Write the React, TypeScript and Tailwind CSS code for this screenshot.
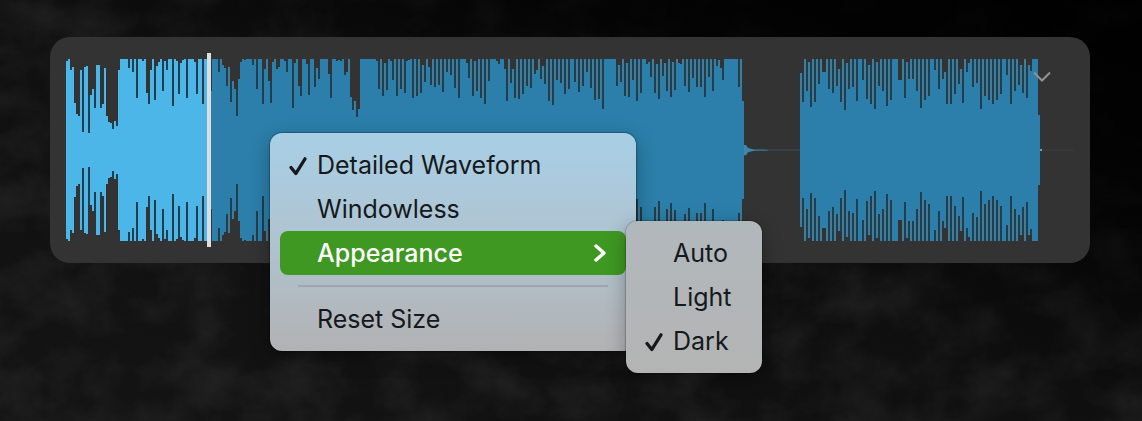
import { useState } from "react";

interface MenuItemProps {
  label: string;
  checked?: boolean;
  onSelect?: () => void;
}

// How far each 2px bar stops short of full height, top and bottom alike
const INTRO = [
  2, 0, 11, 8, 44, 55, 57, 11, 73, 8, 7, 74, 36, 30, 49, 6, 6, 49, 45, 9, 57, 63, 64, 70, 62, 67, 11, 0, 0, 0,
  0, 9, 0, 13, 0, 39, 0, 0, 2, 0, 34, 45, 11, 0, 41, 7, 3, 0, 32, 2, 11, 0, 0, 47, 0, 2, 35, 4, 1, 0,
  39, 0, 0, 0, 3, 35, 0, 0, 45, 0, 0, 0, 32, 0, 0, 0, 13, 0, 6, 9, 27, 8, 43, 22, 30, 57, 20, 3, 0, 1,
  0, 0, 0, 6, 0, 30, 0, 0, 45, 10, 0, 22, 44, 3, 0, 10, 8, 0, 0, 2, 13, 0, 0, 49, 4, 0, 27, 37, 0, 0,
  5, 36, 0, 0, 28, 9, 20, 0, 0, 0, 0, 15, 39, 0, 0, 2, 1, 2, 0, 16, 13, 0, 38, 51, 42, 58, 50, 0, 0, 0,
  0, 0, 0, 0, 0, 2, 30, 0, 37, 4, 31, 0, 2, 21, 0, 37, 0, 30, 0, 34, 2, 1, 0, 39, 0, 37, 0, 34, 6, 23,
  0, 8, 26, 0, 28, 0, 26, 0, 33, 0, 13, 0, 16, 0, 29, 0, 39, 0, 0, 0, 4, 19, 0, 37, 2, 32, 0, 39, 0, 45,
  0, 22, 0, 0, 0, 2, 5, 0, 0, 10, 42, 0, 24, 10, 39, 0, 40, 0, 35, 0, 27, 0, 29, 0, 15, 11, 0, 20, 7, 25,
  0, 42, 0, 46, 0, 21, 0, 24, 0, 35, 0, 30, 0, 0, 23, 0, 33, 0, 27, 0, 13, 0, 29, 0, 41, 0, 40, 0, 50, 0,
  0, 0, 0, 0, 0, 27, 6, 23, 0, 37, 4, 38, 0, 21, 0, 42, 0, 34, 0, 0, 5, 3, 18, 0, 34, 5, 40, 0, 17, 4,
  32, 0, 38, 3, 31, 0, 4, 5, 0, 27, 0, 33, 0, 19, 0, 28, 0, 28, 0, 38, 0, 18, 0, 32, 0, 7, 1, 9, 21, 0,
  0, 0, 0, 0, 0, 0, 28, 0, 42,
];

const OUTRO = [
  14, 43, 0, 32, 3, 48, 0, 43, 0, 25, 0, 13, 13, 0, 30, 0, 34, 0, 27, 10, 43, 0, 51, 4, 30, 0, 28, 0, 42, 0,
  0, 21, 0, 40, 6, 45, 0, 50, 3, 27, 0, 32, 0, 47, 0, 41, 0, 0, 0, 21, 21, 0, 39, 3, 20, 0, 20, 0, 32, 0,
  49, 0, 41, 0, 37, 0, 0, 11, 0, 30, 0, 20, 13, 45, 0, 45, 0, 35, 0, 25, 10, 44, 0, 13, 4, 0, 28, 0, 24, 0,
  50, 0, 37, 0, 41, 0, 45, 0, 41, 0, 35, 0, 0, 16, 0, 45, 0, 32, 0, 26, 6, 34, 0, 39, 6, 12, 0, 0, 0, 56,
];

const OUTRO_X = 734;
const PLAYHEAD_X = 143;
const MIDDLE = 97;

const bars = (insets: number[], start: number) =>
  insets.map((inset, i) => `M${start + i * 2} ${6 + inset}h2v${182 - inset * 2}h-2z`).join("");

// The same stretch of one bar, above and below the middle line
const mirrored = (x: number, from: number, to: number) =>
  `M${x} ${6 + from}h2v${to - from}h-2zM${x} ${188 - to}h2v${to - from}h-2z`;

// Narrow dips between two taller bars get a darker blue tint
const dips = (insets: number[], start: number) =>
  insets
    .map((inset, i) => {
      const edge = Math.max(insets[i - 1] ?? 91, insets[i + 1] ?? 91);
      return inset - edge > 2 ? mirrored(start + i * 2, edge, inset) : "";
    })
    .join("");

// Lone tall bars are a little greyer where they stand free
const tips = (insets: number[], start: number) =>
  insets
    .map((inset, i) => {
      const edge = Math.min(insets[i - 1] ?? 91, insets[i + 1] ?? 91);
      return edge - inset > 2 ? mirrored(start + i * 2, inset, edge) : "";
    })
    .join("");

const Waveform = () => {
  const wave = bars(INTRO, 0) + bars(OUTRO, OUTRO_X);

  return (
    <svg
      viewBox="0 0 1008 194"
      preserveAspectRatio="none"
      shapeRendering="crispEdges"
      className="block h-[194px] w-full"
      role="img"
      aria-label="Waveform"
    >
      <clipPath id="played">
        <rect width={PLAYHEAD_X} height="194" />
      </clipPath>
      <path d={wave} fill="#2b7faa" />
      <path d={tips(INTRO, 0) + tips(OUTRO, OUTRO_X)} fill="#3f7d9c" />
      <path d={wave} fill="#4db6e8" clipPath="url(#played)" />
      <path d={dips(INTRO, 0) + dips(OUTRO, OUTRO_X)} fill="#223d4b" />
      <g shapeRendering="auto">
        <path d="M678 92h2l2 3l6 1.4l14 .3v.8l-14 .3l-6 1.4l-2 3h-2z" fill="#3f87ab" />
        <path d={`M702 ${MIDDLE}h32`} stroke="#36505e" />
        <path d={`M974 ${MIDDLE}h2`} stroke="#6aa0bc" strokeWidth="2" />
        <path d={`M976 ${MIDDLE}h32`} stroke="#35434b" />
      </g>
      <rect x="141" width="4" height="194" fill="#dedede" />
    </svg>
  );
};

const CheckIcon = () => (
  <svg viewBox="0 0 18 20" className="h-5 w-[18px]" fill="none" stroke="currentColor" strokeWidth="3.2" strokeLinecap="round" strokeLinejoin="round">
    <path d="M2 11.4L6.8 17.6L16 2.8" />
  </svg>
);

const MenuItem = ({ label, checked = false, onSelect }: MenuItemProps) => (
  <button
    role="menuitemcheckbox"
    aria-checked={checked}
    onClick={onSelect}
    className="flex h-11 w-full items-center gap-[10px] px-[9px] pt-[2px] text-left whitespace-nowrap"
  >
    <span className="w-[18px] shrink-0">{checked && <CheckIcon />}</span>
    {label}
  </button>
);

const Backdrop = () => (
  <svg className="absolute inset-0 h-full w-full" aria-hidden="true">
    <filter id="grain" x="0" y="0" width="100%" height="100%">
      <feTurbulence type="fractalNoise" baseFrequency="0.018 0.022" numOctaves="5" seed="8" />
      <feColorMatrix values="0 0 0 0 1  0 0 0 0 1  0 0 0 0 1  0.12 0 0 0 -0.04" />
    </filter>
    <linearGradient id="fade" x1="0" y1="1" x2="1" y2="0">
      <stop offset="0" stopColor="#141414" />
      <stop offset="0.5" stopColor="#0f0f0f" />
      <stop offset="0.75" stopColor="#040404" />
      <stop offset="1" stopColor="#000" />
    </linearGradient>
    <linearGradient id="reach" x1="0" y1="1" x2="1" y2="0">
      <stop offset="0.5" stopColor="#fff" />
      <stop offset="0.85" stopColor="#333" />
    </linearGradient>
    <mask id="grainMask">
      <rect width="100%" height="100%" fill="url(#reach)" />
    </mask>
    <rect width="100%" height="100%" fill="url(#fade)" />
    <g mask="url(#grainMask)">
      <rect width="100%" height="100%" filter="url(#grain)" />
    </g>
  </svg>
);

export default function App() {
  const [detailed, setDetailed] = useState(true);
  const [windowless, setWindowless] = useState(false);
  const [appearance, setAppearance] = useState("Dark");

  return (
    <main className="relative min-h-screen overflow-hidden bg-black py-[37px] pr-[52px] pl-[50px] font-[Inter,'Liberation_Sans',sans-serif] text-[25px] text-[#15191c]">
      <Backdrop />
      <section className="relative rounded-[20px] bg-[#333] p-4">
        <Waveform />
        <button aria-label="Show options" className="absolute top-[33px] right-[38px] text-[#929292]">
          <svg viewBox="0 0 20 14" className="h-[14px] w-5" fill="none" stroke="currentColor" strokeWidth="2">
            <path d="M2 2.5L10 10.5L18 2.5" />
          </svg>
        </button>

        <div
          role="menu"
          className="absolute top-24 left-[220px] w-[366px] rounded-xl bg-linear-to-b from-[#a8cfe6] via-[#afc3d0] to-[#b2b2b3] p-[10px] shadow-[0_0_1px_1px_rgba(0,0,0,0.25),0_6px_20px_rgba(0,0,0,0.3)]"
        >
          <MenuItem label="Detailed Waveform" checked={detailed} onSelect={() => setDetailed(!detailed)} />
          <MenuItem label="Windowless" checked={windowless} onSelect={() => setWindowless(!windowless)} />
          <div className="relative">
            <button
              role="menuitem"
              aria-haspopup="menu"
              aria-expanded="true"
              className="flex h-11 w-full items-center justify-between rounded-lg bg-[#3e9822] pt-[2px] pr-5 pl-[37px] font-medium text-white"
            >
              Appearance
              <svg viewBox="0 0 12 20" className="h-5 w-3" fill="none" stroke="currentColor" strokeWidth="3.4" strokeLinecap="round" strokeLinejoin="round">
                <path d="M2 2L10 9L2 16" />
              </svg>
            </button>
            <div
              role="menu"
              aria-label="Appearance"
              className="absolute -top-[10px] left-full w-[136px] rounded-xl bg-linear-to-b from-[#b1b8bc] to-[#b4b4b4] p-[10px] shadow-[0_0_1px_1px_rgba(0,0,0,0.2),0_6px_20px_rgba(0,0,0,0.3)]"
            >
              {["Auto", "Light", "Dark"].map((name) => (
                <MenuItem key={name} label={name} checked={appearance === name} onSelect={() => setAppearance(name)} />
              ))}
            </div>
          </div>
          <hr className="mx-[18px] my-[10px] border-t-2 border-[#9ea6ac]" />
          <MenuItem label="Reset Size" />
        </div>
      </section>
    </main>
  );
}
